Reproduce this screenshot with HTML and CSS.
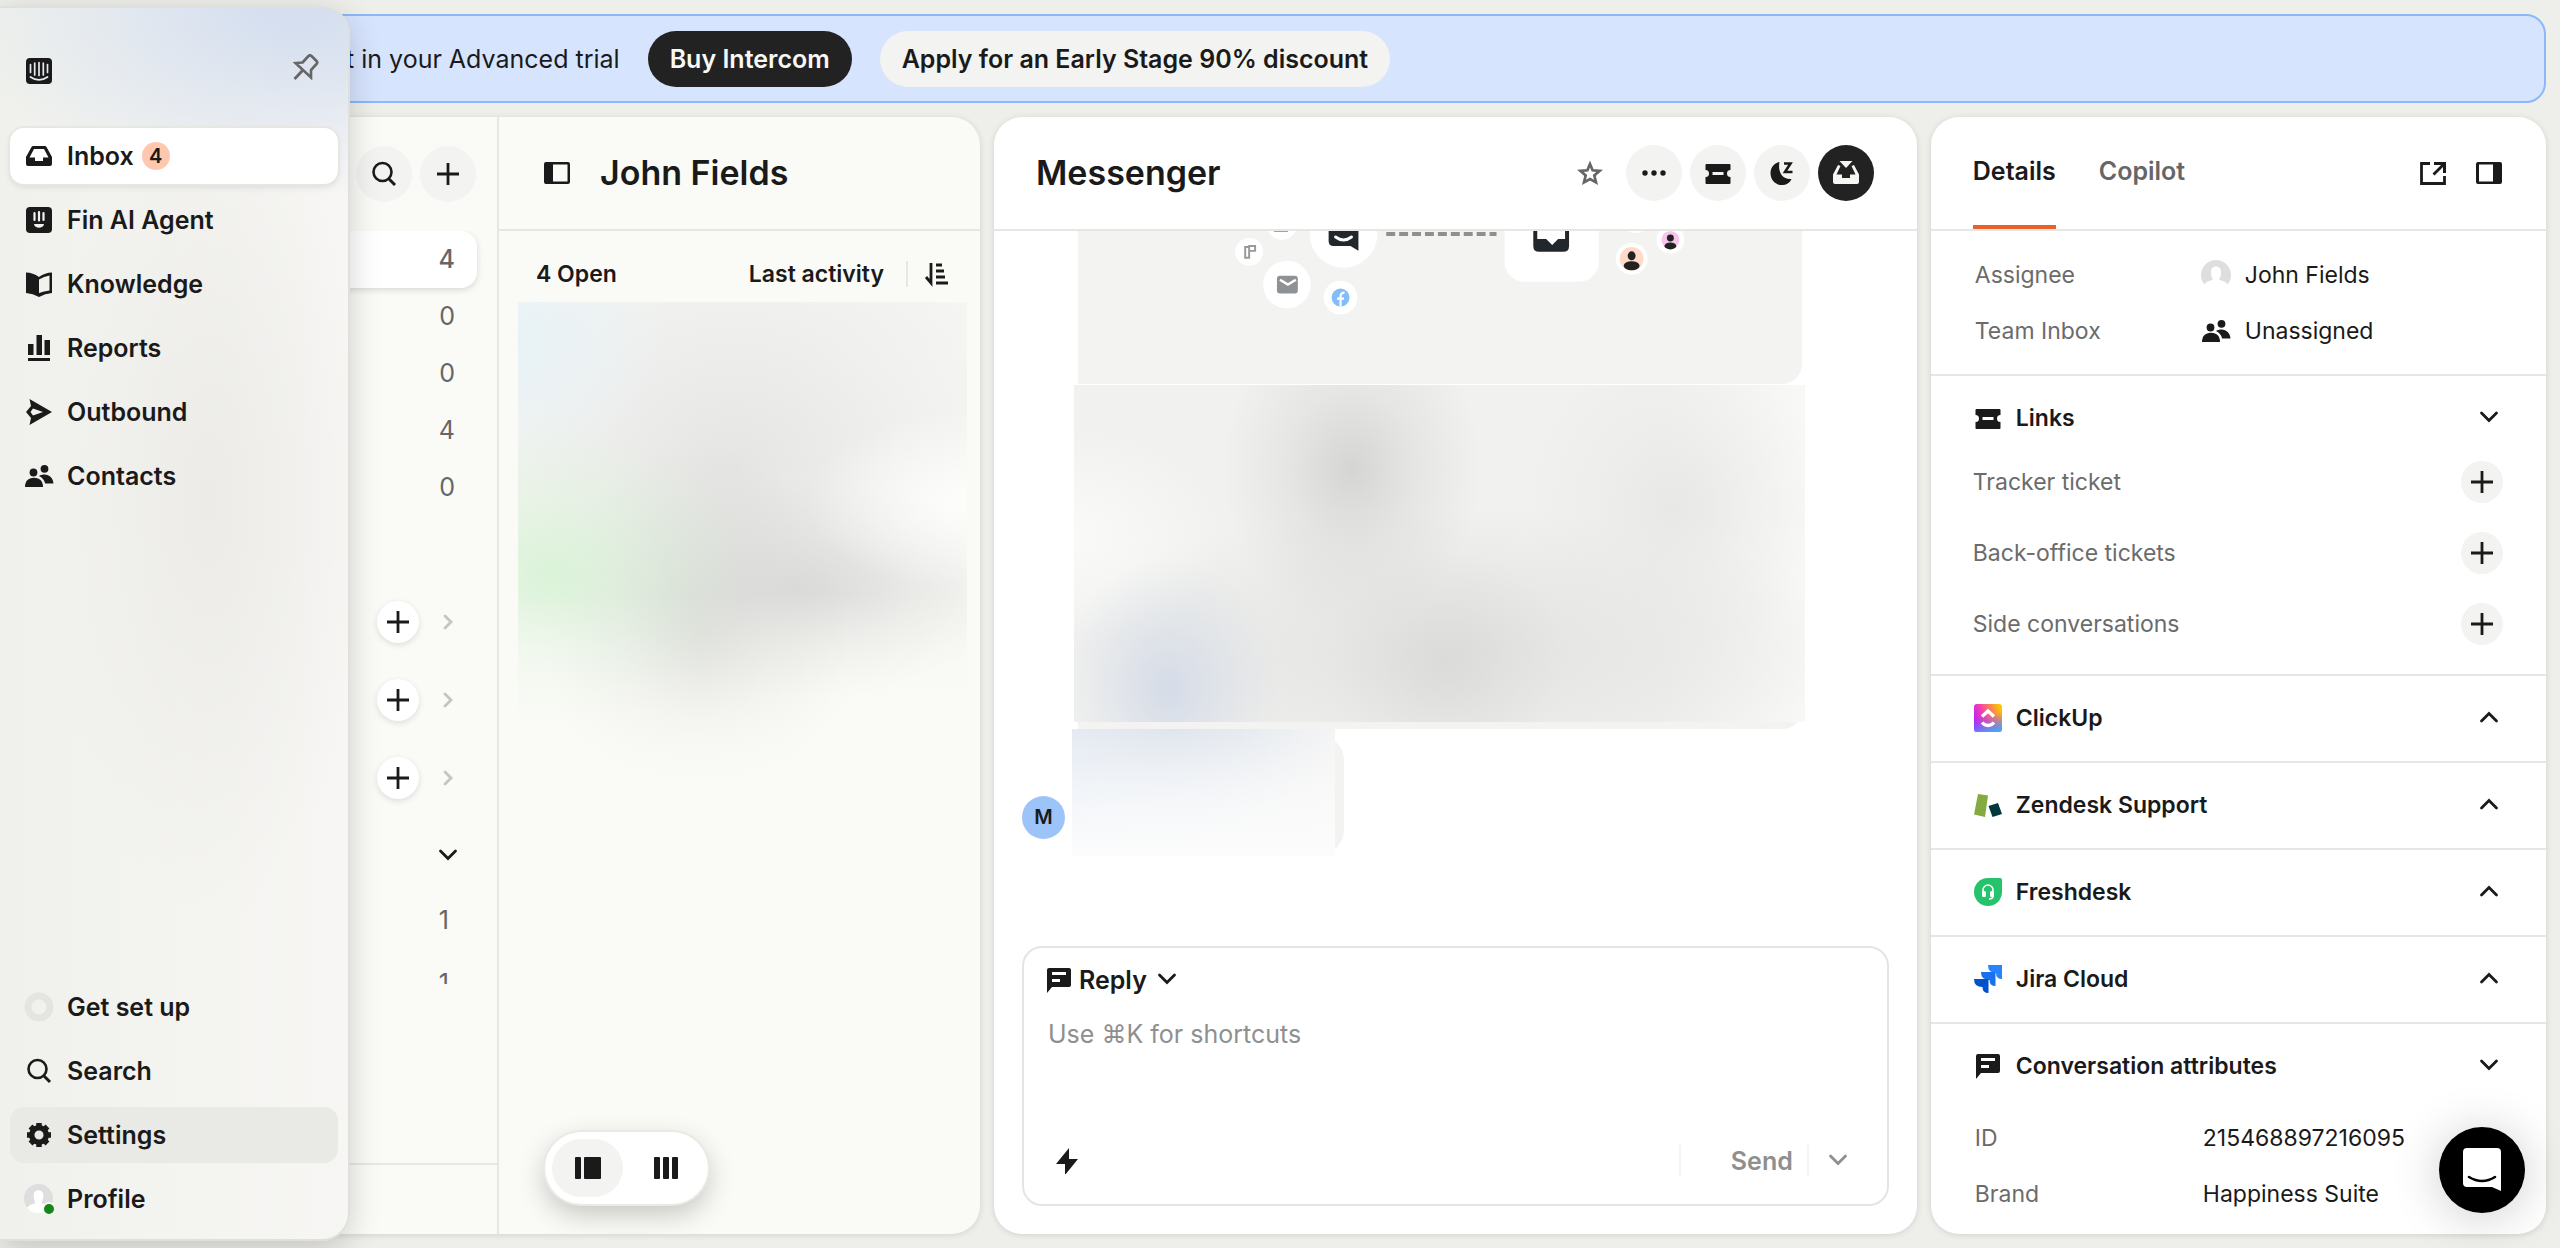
FILE: index.html
```html
<!DOCTYPE html>
<html lang="en">
<head>
    <meta charset="UTF-8">
    <meta name="viewport" content="width=device-width, initial-scale=1.0">
    <title>Inbox</title>
    <link rel="stylesheet" href="styles.css">
</head>
<body>
    <!-- Shared icons -->
    <svg class="sprite" aria-hidden="true">
        <symbol id="search" viewBox="0 0 26 26"><circle cx="11.500" cy="11" r="9" fill="none" stroke="currentColor" stroke-width="2.600"/><path d="M18 18l6 6" stroke="currentColor" stroke-width="3"/></symbol>
        <symbol id="plus" viewBox="0 0 26 26"><path d="M13 2v22M2 13h22" stroke="currentColor" stroke-width="2.800"/></symbol>
        <symbol id="down" viewBox="0 0 26 26"><path d="M5.500 8l7.500 7.500L20.500 8" fill="none" stroke="currentColor" stroke-width="2.800" stroke-linecap="round"/></symbol>
        <symbol id="up" viewBox="0 0 26 26"><path d="M5.500 16L13 8.500l7.500 7.500" fill="none" stroke="currentColor" stroke-width="2.800" stroke-linecap="round"/></symbol>
        <symbol id="right" viewBox="0 0 26 26"><path d="M10 7l6 6-6 6" fill="none" stroke="currentColor" stroke-width="2.800" stroke-linecap="round"/></symbol>
        <symbol id="people" viewBox="0 0 30 30"><circle cx="9.500" cy="11.500" r="3.900"/><path d="M1 26c0-5.500 3-9.200 9-9.200s9 3.700 9 9.200z"/><circle cx="20.500" cy="7.800" r="3.900"/><path d="M15 15c1.500-1 3.500-1.500 5.500-1.500 5 0 8.500 3.500 9 9h-8.300c-1-3.500-3-6-6.200-7.500z"/></symbol>
        <symbol id="avatar" viewBox="0 0 28 28"><circle cx="14" cy="14" r="14" fill="#dedede"/><path d="M14 6c3 0 4.700 2 4.700 5.500S17 18 17 18.500c4 1 7 2.500 8 4.500a14 14 0 0 1-22 0c1-2 4-3.500 8-4.500 0-.500-1.700-3.500-1.700-7S11 6 14 6z" fill="#fff"/></symbol>
        <symbol id="ticket" viewBox="0 0 26 26"><path fill-rule="evenodd" d="M1.500 4h23q1 0 1 1v5a3.500 3.500 0 0 0 0 7v6q0 1-1 1h-23q-1 0-1-1v-6a3.500 3.500 0 0 0 0-7V5q0-1 1-1zM7.500 12v3h11v-3z"/></symbol>
        <symbol id="note" viewBox="0 0 26 26"><path fill-rule="evenodd" d="M3 1h20a2 2 0 0 1 2 2v15a2 2 0 0 1-2 2H6l-5 6V3a2 2 0 0 1 2-2zM6 5v3h14V5zM6 12v3h8v-3z"/></symbol>
    </svg>

    <nav class="sidebar">
        <div class="sidebar-top">
            <svg class="icon" viewBox="0 0 26 26"><rect width="26" height="26" rx="4"/><path d="M4.500 6.500v8M8.700 5v12M13 4.500v13M17.300 5v12M21.500 6.500v8" stroke="#e6eaf0" stroke-width="1.700" stroke-linecap="round"/><path d="M4.500 19c5 3.700 12 3.700 17 0" fill="none" stroke="#e6eaf0" stroke-width="1.800" stroke-linecap="round"/></svg>
            <button class="pin" aria-label="Unpin menu"><svg class="icon" viewBox="0 0 26 26"><path d="M9.500 8.500l6-6.500q1.500-1.500 3 0l5 5q1.500 1.500 0 3l-5.500 6v7.500L2.500 9z" fill="none" stroke="currentColor" stroke-width="2.600"/><path d="M10 16l-8.500 9" stroke="currentColor" stroke-width="2.800"/></svg></button>
        </div>
        <div class="menu">
            <a href="#" class="active"><svg class="icon" viewBox="0 0 26 26"><path fill-rule="evenodd" d="M7 3h12q1 0 1.500 1L26 14v7q0 2-2 2H2q-2 0-2-2v-7L5.500 4Q6 3 7 3zM8 6l-4.500 8.500H9V18h8v-3.500h5.500L18 6z"/></svg>Inbox <span class="badge">4</span></a>
            <a href="#"><svg class="icon" viewBox="0 0 26 26"><rect width="26" height="26" rx="4"/><path d="M8.500 6v7M13 5v8.500M17.500 6v7" stroke="#f2f2ef" stroke-width="2.200" stroke-linecap="round"/><path d="M8 17h10c-.500 5-9.500 5-10 0z" fill="#f2f2ef"/></svg>Fin AI Agent</a>
            <a href="#"><svg class="icon" viewBox="0 0 26 26"><path fill-rule="evenodd" d="M0 1.500q7 0 13 4.500 6-4.500 13-4.500V22q-7 .500-13 4-6-3.500-13-4zM13 8.500v13.500q5-2 10.500-2.500V4.500Q18 5.500 13 8.500z"/></svg>Knowledge</a>
            <a href="#"><svg class="icon" viewBox="0 0 26 26"><path d="M2 9h5.500v11H2zM10.500 0H16v20h-5.500zM18.500 5H24v15h-5.500zM2 23h22v3H2z"/></svg>Reports</a>
            <a href="#"><svg class="icon" viewBox="0 0 26 26"><path fill-rule="evenodd" d="M3.500 0L26 13 3.500 26l1.500-7-5-6 5-6zM7 9.500L4.500 13 7 16.500l10-3.500z"/></svg>Outbound</a>
            <a href="#"><svg class="icon people"><use href="#people"/></svg>Contacts</a>
        </div>
        <div class="menu">
            <a href="#"><svg class="icon people" viewBox="0 0 30 30"><circle cx="15" cy="15" r="11" fill="none" stroke="#e4e5e0" stroke-width="7"/></svg>Get set up</a>
            <a href="#"><svg class="icon"><use href="#search"/></svg>Search</a>
            <a href="#" class="hovered"><svg class="icon" viewBox="0 0 26 26"><circle cx="13" cy="13" r="7.300" fill="none" stroke="currentColor" stroke-width="5.500"/><path d="M13 1v5M13 20v5M1 13h5M20 13h5M4.500 4.500l4 4M17.500 17.500l4 4M4.500 21.500l4-4M17.500 8.500l4-4" stroke="currentColor" stroke-width="5.500"/></svg>Settings</a>
            <a href="#"><svg class="icon people" viewBox="0 0 30 30"><use href="#avatar" width="29" height="29"/><circle cx="25" cy="25" r="7" fill="#f8f8f6"/><circle cx="25" cy="25" r="5" fill="#16851a"/></svg>Profile</a>
        </div>
    </nav>

    <div class="banner">
        <span>left in your Advanced trial</span>
        <button class="pill dark">Buy Intercom</button>
        <button class="pill">Apply for an Early Stage 90% discount</button>
    </div>

    <main>
        <div class="panel lists">
            <section class="folders">
                <div class="folders-head">
                    <button class="round" aria-label="Search"><svg class="icon"><use href="#search"/></svg></button>
                    <button class="round" aria-label="New conversation"><svg class="icon"><use href="#plus"/></svg></button>
                </div>
                <div class="folders-scroll">
                    <ul class="counts">
                        <li class="selected">4</li>
                        <li>0</li>
                        <li>0</li>
                        <li>4</li>
                        <li>0</li>
                    </ul>
                    <div class="group"><button class="round small raised" aria-label="Add"><svg class="icon"><use href="#plus"/></svg></button><svg class="icon faint"><use href="#right"/></svg></div>
                    <div class="group"><button class="round small raised" aria-label="Add"><svg class="icon"><use href="#plus"/></svg></button><svg class="icon faint"><use href="#right"/></svg></div>
                    <div class="group"><button class="round small raised" aria-label="Add"><svg class="icon"><use href="#plus"/></svg></button><svg class="icon faint"><use href="#right"/></svg></div>
                    <div class="group"><svg class="icon"><use href="#down"/></svg></div>
                    <ul class="views">
                        <li>1</li>
                        <li>1</li>
                    </ul>
                </div>
                <div class="folders-foot"></div>
            </section>

            <section class="conversations">
                <header>
                    <button class="plain" aria-label="Toggle folders"><svg class="icon" viewBox="0 0 26 26"><path fill-rule="evenodd" d="M2 2h22q2 0 2 2v18q0 2-2 2H2q-2 0-2-2V4q0-2 2-2zM9 4.500v17h14.500v-17z"/></svg></button>
                    <h2>John Fields</h2>
                </header>
                <div class="filters">
                    <button class="plain">4 Open</button>
                    <button class="plain sort">Last activity</button>
                    <button class="plain order" aria-label="Sort order"><svg class="icon" viewBox="0 0 26 26"><path d="M7 2v18M2 16l5 6V12M12 4h6M12 10h8M12 16h9M12 22h12" fill="none" stroke="currentColor" stroke-width="2.800"/></svg></button>
                </div>
                <div class="blur-list"></div>
                <div class="view-toggle">
                    <button class="on" aria-label="List view"><svg class="icon" viewBox="0 0 26 26"><rect y="2" width="6" height="22" rx="1"/><rect x="9" y="2" width="17" height="22" rx="1"/></svg></button>
                    <button aria-label="Table view"><svg class="icon" viewBox="0 0 26 26"><rect x="1" y="2" width="6" height="22" rx="1"/><rect x="10" y="2" width="6" height="22" rx="1"/><rect x="19" y="2" width="6" height="22" rx="1"/></svg></button>
                </div>
            </section>
        </div>

        <section class="panel chat">
            <header>
                <h2>Messenger</h2>
                <div class="actions">
                    <button class="round bare" aria-label="Star"><svg class="icon" viewBox="0 0 26 26"><path d="M13 4l2.600 6.300 7 .600-5.300 4.500 1.700 7L13 19l-6 3.400 1.700-7-5.300-4.500 7-.600z" fill="none" stroke="currentColor" stroke-width="2.700"/></svg></button>
                    <button class="round" aria-label="More"><svg class="icon" viewBox="0 0 26 26"><circle cx="4" cy="13" r="2.700"/><circle cx="13" cy="13" r="2.700"/><circle cx="22" cy="13" r="2.700"/></svg></button>
                    <button class="round" aria-label="Ticket"><svg class="icon"><use href="#ticket"/></svg></button>
                    <button class="round" aria-label="Snooze"><svg class="icon" viewBox="0 0 26 26"><path d="M10.500 2C5 3 1.500 8 1.500 13c0 7 5 12 11 12 5 0 8-2 10-6-9 1-14-7-12-17z"/><path d="M15 3.500h6.500L16 12h7.500" fill="none" stroke="currentColor" stroke-width="2.600"/></svg></button>
                    <button class="round dark" aria-label="Close conversation"><svg class="icon" viewBox="0 0 26 26"><path d="M5 5l2.500 1-4 8.500H9V18h8v-3.500h5.500l-4-8.500L21 5l5 9.500V22q0 2-2 2H2q-2 0-2-2v-7.500z" fill="#f6f6f2"/><path d="M6.500 1h13L13 8z" fill="#f6f6f2"/></svg></button>
                </div>
            </header>

            <div class="messages">
                <div class="illustration">
                    <svg viewBox="0 0 722 154">
                        <g fill="#fff">
                            <circle cx="202" cy="-6" r="15"/><circle cx="169" cy="21" r="14"/><circle cx="207" cy="54" r="24"/><circle cx="264" cy="3" r="34"/><circle cx="261" cy="67" r="17"/>
                            <rect x="426" y="-45" width="95" height="96" rx="20"/><circle cx="554" cy="28" r="16"/><circle cx="593" cy="9" r="14"/><circle cx="558" cy="-12" r="14"/>
                        </g>
                        <path d="M194 0h14v1h-14z" fill="#f08a5d"/>
                        <path d="M249-20h30v40l-8-5h-17q-5 0-5-5z" fill="#22272c"/>
                        <path d="M256 6q8 6 16 0" fill="none" stroke="#fff" stroke-width="3" stroke-linecap="round"/>
                        <path d="M307 3h111" stroke="#8f8f8f" stroke-width="4" stroke-dasharray="9 4"/>
                        <path d="M455-20h36v35q0 6-6 6h-24q-6 0-6-6zM459-20V8h9l6 6 6-6h7v-28z" fill="#22272c" fill-rule="evenodd"/>
                        <path d="M165 16v11h4v-11zM169 15h6v5h-6z" fill="none" stroke="#9a9a9a" stroke-width="2"/>
                        <rect x="197" y="45" width="21" height="18" rx="3" fill="#8f9295"/><path d="M200 49l8 5 8-5" fill="none" stroke="#fff" stroke-width="2.500"/>
                        <circle cx="261" cy="67" r="9" fill="#82bdf7"/><path d="M261 76v-10q0-4 4-4M257.500 68h7" fill="none" stroke="#fff" stroke-width="2.200"/>
                        <circle cx="554" cy="28" r="12" fill="#ffd9c9"/><ellipse cx="554" cy="25" rx="4" ry="4.500" fill="#222"/><ellipse cx="554" cy="35" rx="8" ry="4.500" fill="#222"/>
                        <circle cx="593" cy="9" r="9" fill="#f9c4ea"/><circle cx="593" cy="7" r="3.500" fill="#222"/><ellipse cx="593" cy="15" rx="6" ry="3.500" fill="#222"/>
                    </svg>
                </div>
                <div class="message"><div class="blur-message"></div></div>
                <div class="message-row">
                    <span class="initial">M</span>
                    <div class="reply"><div class="blur-reply"></div></div>
                </div>
            </div>

            <form class="composer">
                <label class="mode">
                    <svg class="icon"><use href="#note"/></svg>
                    <select aria-label="Reply type"><option>Reply</option><option>Note</option></select>
                    <svg class="icon"><use href="#down"/></svg>
                </label>
                <textarea aria-label="Message" placeholder="Use ⌘K for shortcuts"></textarea>
                <div class="composer-foot">
                    <button type="button" class="plain" aria-label="Shortcuts"><svg class="icon" viewBox="0 0 26 26"><path d="M15 0v11h9L11 27V16H2z"/></svg></button>
                    <button type="submit" class="plain send">Send</button>
                    <button type="button" class="plain more" aria-label="Send options"><svg class="icon"><use href="#down"/></svg></button>
                </div>
            </form>
        </section>

        <aside class="panel details">
            <header>
                <button class="tab current">Details</button>
                <button class="tab">Copilot</button>
                <div class="tools">
                    <button class="plain" aria-label="Open in new tab"><svg class="icon" viewBox="0 0 26 26"><path d="M10 3.500H1.500v20h23V16" fill="none" stroke="currentColor" stroke-width="2.800"/><path d="M14 2h12v11h-3V7L14.500 15.500l-2-2L21 5h-7z"/></svg></button>
                    <button class="plain" aria-label="Toggle details"><svg class="icon" viewBox="0 0 26 26"><path fill-rule="evenodd" d="M2 2h22q2 0 2 2v18q0 2-2 2H2q-2 0-2-2V4q0-2 2-2zM3 4.500v17h14v-17z"/></svg></button>
                </div>
            </header>

            <dl class="fields">
                <div><dt>Assignee</dt><dd><svg class="icon people"><use href="#avatar"/></svg>John Fields</dd></div>
                <div><dt>Team Inbox</dt><dd><svg class="icon people"><use href="#people"/></svg>Unassigned</dd></div>
            </dl>

            <section class="links">
                <h3><svg class="icon"><use href="#ticket"/></svg>Links<button class="plain" aria-label="Collapse"><svg class="icon"><use href="#down"/></svg></button></h3>
                <ul>
                    <li>Tracker ticket<button class="round small" aria-label="Add tracker ticket"><svg class="icon"><use href="#plus"/></svg></button></li>
                    <li>Back-office tickets<button class="round small" aria-label="Add back-office ticket"><svg class="icon"><use href="#plus"/></svg></button></li>
                    <li>Side conversations<button class="round small" aria-label="Add side conversation"><svg class="icon"><use href="#plus"/></svg></button></li>
                </ul>
            </section>

            <section class="app">
                <h3><svg class="icon logo" viewBox="0 0 28 28"><defs><linearGradient id="cu" x1="0" y1="0.700" x2="1" y2="0.300"><stop offset="0" stop-color="#b31dff"/><stop offset=".4" stop-color="#f43fb0"/><stop offset="1" stop-color="#ffc400"/></linearGradient><linearGradient id="cb" x1=".5" y1=".1" x2=".7" y2="1"><stop offset=".3" stop-color="#7a5cff" stop-opacity="0"/><stop offset="1" stop-color="#40a8ff"/></linearGradient></defs><rect width="28" height="28" rx="3" fill="url(#cu)"/><rect width="28" height="28" rx="3" fill="url(#cb)"/><path d="M8 12.500L14 7l6 5.500M8 18.500c3.500 4 8.500 4 12 0" fill="none" stroke="#fff" stroke-width="3.400"/></svg>ClickUp<button class="plain" aria-label="Expand"><svg class="icon"><use href="#up"/></svg></button></h3>
            </section>
            <section class="app">
                <h3><svg class="icon logo" viewBox="0 0 28 28"><path d="M4 3l10 1.500L11 26 0 23.500z" fill="#84ab3f"/><path d="M14.500 15l9.500-3 4 11-9.500 3z" fill="#03363d"/></svg>Zendesk Support<button class="plain" aria-label="Expand"><svg class="icon"><use href="#up"/></svg></button></h3>
            </section>
            <section class="app">
                <h3><svg class="icon logo" viewBox="0 0 28 28"><path d="M14 0h12q2 0 2 2v12A14 14 0 1 1 14 0z" fill="#27c26c"/><path d="M9 15v-3a5 5 0 0 1 10 0v6q0 3-4 3" fill="none" stroke="#fff" stroke-width="1.600"/><rect x="8" y="13" width="4" height="6" rx="1.500" fill="#fff"/><rect x="16" y="13" width="4" height="6" rx="1.500" fill="#fff"/></svg>Freshdesk<button class="plain" aria-label="Expand"><svg class="icon"><use href="#up"/></svg></button></h3>
            </section>
            <section class="app">
                <h3><svg class="icon logo" viewBox="0 0 28 28"><path d="M14 0h14v14q-6 0-6-6-8 0-8-8z" fill="#2684ff"/><path d="M7 7h14.500v14q-6 0-6-6Q7 15 7 7z" fill="#1a6fec"/><path d="M0 14h14.500v14q-6 0-6-6Q0 22 0 14z" fill="#0052cc"/></svg>Jira Cloud<button class="plain" aria-label="Expand"><svg class="icon"><use href="#up"/></svg></button></h3>
            </section>

            <section class="attributes">
                <h3><svg class="icon"><use href="#note"/></svg>Conversation attributes<button class="plain" aria-label="Collapse"><svg class="icon"><use href="#down"/></svg></button></h3>
                <dl class="fields">
                    <div><dt>ID</dt><dd>215468897216095</dd></div>
                    <div><dt>Brand</dt><dd>Happiness Suite</dd></div>
                </dl>
            </section>
        </aside>
    </main>

    <button class="launcher" aria-label="Open messenger"><svg viewBox="0 0 38 44"><path d="M4 0h30q4 0 4 4v39l-9-4H4q-4 0-4-4V4q0-4 4-4z" fill="#fff"/><path d="M6 29q13 8 26 0" fill="none" stroke="#000" stroke-width="2.600" stroke-linecap="round"/></svg></button>
</body>
</html>
```
FILE: styles.css
```css
* {
    margin: 0;
    padding: 0;
    box-sizing: border-box;
}

body {
    background-color: #eeeeea;
    color: #1a1a1a;
    font-family: Inter, "Liberation Sans", sans-serif;
    font-size: 25px;
    line-height: 32px;
    height: 100vh;
    display: flex;
    flex-direction: column;
    gap: 14px;
    padding: 14px 14px 14px 0;
    overflow: hidden;
}

button,
select,
textarea {
    font: inherit;
    color: inherit;
    background: none;
    border: none;
    cursor: pointer;
}

ul {
    list-style: none;
}

.sprite {
    display: none;
}

.icon {
    width: 26px;
    height: 26px;
    fill: currentColor;
    flex: none;
    display: block;
}

.people {
    width: 30px;
    height: 30px;
    margin: 0 -2px;
}

.logo {
    width: 28px;
    height: 28px;
    margin: 0 -1px;
}

.plain {
    font-weight: 600;
}

.round {
    width: 56px;
    height: 56px;
    border-radius: 50%;
    background-color: #f3f3f1;
    display: grid;
    place-items: center;
    flex: none;
}

.small {
    width: 42px;
    height: 42px;
}

.raised {
    background-color: #fff;
    box-shadow: 0 2px 6px rgba(0,0,0,0.12);
}

.bare {
    background: none;
    color: #666;
}

.dark {
    background-color: #222;
    color: #f8f8f4;
}

/* Navigation that slides over the page */
.sidebar {
    position: absolute;
    z-index: 2;
    left: 0;
    top: 6px;
    bottom: 7px;
    width: 350px;
    border: 2px solid #dfdfdb;
    border-left: none;
    border-radius: 0 28px 28px 0;
    padding: 46px 10px 12px;
    display: flex;
    flex-direction: column;
    background:
        radial-gradient(ellipse 340px 190px at 85% 0, #d5dfef 10%, rgba(213,223,239,0) 100%),
        radial-gradient(ellipse 160px 420px at 60% 40%, #ecebe8, rgba(236,235,232,0) 100%),
        linear-gradient(90deg, #f0f1ec, #f7f6f4);
    box-shadow: 0 8px 32px rgba(0,0,0,0.18);
}

.sidebar-top {
    display: flex;
    justify-content: space-between;
    align-items: flex-end;
    height: 30px;
    padding: 0 19px 0 16px;
    margin-bottom: 44px;
}

.pin {
    align-self: flex-start;
    color: #666;
}

.menu {
    display: flex;
    flex-direction: column;
    gap: 8px;
}

.menu:last-child {
    margin-top: auto;
}

.menu a {
    display: flex;
    align-items: center;
    gap: 15px;
    height: 56px;
    padding: 0 16px;
    border-radius: 14px;
    color: inherit;
    font-weight: 600;
    text-decoration: none;
}

.menu .active {
    background-color: #fff;
    box-shadow: 0 0 0 2px #e6e6e2, 0 3px 6px rgba(0,0,0,0.1);
}

.menu .hovered {
    background-color: #e9e9e5;
}

.badge {
    width: 28px;
    height: 28px;
    margin-left: -7px;
    border-radius: 50%;
    background-color: #ffc8ae;
    font-size: 20px;
    line-height: 28px;
    text-align: center;
}

.banner {
    display: flex;
    align-items: center;
    gap: 28px;
    height: 89px;
    flex: none;
    padding-left: 315px;
    border: 2px solid #8ab8f8;
    border-radius: 20px;
    background-color: #d7e4fe;
}

.pill {
    height: 56px;
    padding: 0 22px;
    border-radius: 28px;
    background-color: #f3f3f1;
    font-weight: 600;
}

.pill.dark {
    background-color: #222;
}

main {
    flex: 1;
    min-height: 0;
    display: flex;
    gap: 14px;
}

.panel {
    background-color: #fff;
    border-radius: 28px;
    box-shadow: 0 1px 6px rgba(0,0,0,0.12);
    overflow: hidden;
}

.panel header {
    height: 114px;
    flex: none;
    border-bottom: 2px solid #e6e6e2;
    display: flex;
    align-items: center;
}

h2 {
    font-size: 34px;
    line-height: 44px;
    font-weight: 600;
}

.lists {
    flex: none;
    display: flex;
    background-color: #fafaf6;
    border-radius: 0 28px 28px 0;
}

.folders {
    width: 499px;
    border-right: 2px solid #e6e6e2;
    display: flex;
    flex-direction: column;
    color: #666;
}

.folders-head {
    display: flex;
    justify-content: flex-end;
    align-items: center;
    gap: 8px;
    height: 114px;
    padding-right: 21px;
}

.folders-scroll {
    flex: 1;
    min-height: 0;
    overflow: hidden;
}

.counts {
    margin-bottom: 67px;
}

.counts li {
    height: 57px;
    line-height: 57px;
    margin-right: 20px;
    padding-right: 22px;
    text-align: right;
}

.counts .selected {
    background-color: #fff;
    border-radius: 16px;
    box-shadow: 0 2px 6px rgba(0,0,0,0.14);
    font-weight: 500;
}

.folders button,
.folders .group {
    color: #1a1a1a;
}

.group {
    height: 78px;
    display: flex;
    justify-content: flex-end;
    align-items: center;
    gap: 16px;
    padding-right: 36px;
}

.folders .faint {
    color: #c4c4c0;
}

.views {
    display: grid;
    gap: 13px;
    padding-right: 48px;
    text-align: right;
    line-height: 50px;
}

.folders-foot {
    height: 71px;
    margin-top: 179px;
    border-top: 2px solid #e6e6e2;
}

.conversations {
    width: 481px;
    display: flex;
    flex-direction: column;
    align-items: stretch;
}

.conversations header {
    gap: 30px;
    padding-left: 45px;
}

.filters {
    display: flex;
    align-items: center;
    height: 71px;
    padding: 14px 30px 0 37px;
    font-size: 23px;
}

.sort {
    margin-left: auto;
}

.order {
    margin-left: 22px;
    padding-left: 16px;
    border-left: 2px solid #e6e6e2;
}

.blur-list {
    height: 486px;
    margin: 0 13px 0 19px;
    background:
        linear-gradient(rgba(250,250,246,0) 60%, #fafaf6 100%),
        radial-gradient(ellipse 160px 90px at 100% 41%, #fdfdfc, rgba(253,253,252,0)),
        radial-gradient(ellipse 190px 150px at 8% 56%, #daf3d8, rgba(218,243,216,.4) 50%, rgba(218,243,216,0)),
        radial-gradient(ellipse 150px 130px at 0 8%, #e8f2f6, rgba(232,242,246,0)),
        radial-gradient(ellipse 230px 110px at 62% 59%, #dadad8, rgba(218,218,216,.4) 50%, rgba(218,218,216,0)),
        radial-gradient(ellipse 150px 190px at 40% 68%, #d6d9d3, rgba(214,217,211,.4) 50%, rgba(214,217,211,0)),
        radial-gradient(ellipse 300px 260px at 48% 34%, #e5e5e3, rgba(236,236,234,.6) 60%, rgba(242,242,240,0)),
        linear-gradient(#f5f6f4, #fafaf6);
}

.view-toggle {
    align-self: flex-start;
    display: flex;
    gap: 7px;
    margin: auto 0 30px 46px;
    padding: 7px;
    border-radius: 36px;
    background-color: #fff;
    box-shadow: 0 0 0 2px #e9e9e5, 0 10px 28px rgba(0,0,0,0.22);
}

.view-toggle button {
    width: 71px;
    height: 58px;
    border-radius: 29px;
    display: grid;
    place-items: center;
}

.view-toggle .on {
    background-color: #f3f3f1;
}

.chat {
    flex: 3;
    min-width: 0;
    display: flex;
    flex-direction: column;
}

.chat header {
    justify-content: space-between;
    padding: 0 43px 0 42px;
}

.actions {
    display: flex;
    gap: 8px;
}

.messages {
    flex: 1;
    min-height: 0;
    overflow: hidden;
    padding: 0 112px 0 80px;
}

.illustration {
    margin: 0 3px 0 4px;
    height: 153px;
    overflow: hidden;
    background-color: #f3f3f1;
    border-radius: 0 0 20px 0;
}

.illustration svg {
    display: block;
    width: 100%;
    height: 100%;
}

.message {
    margin: 1px 3px 0 4px;
    padding-bottom: 7px;
    border-radius: 0 0 20px 0;
    background-color: #f3f3f1;
}

.blur-message {
    height: 337px;
    margin: 0 -3px 0 -4px;
    background:
        radial-gradient(ellipse 110px 130px at 13% 90%, #d5dce8, rgba(213,220,232,.45) 50%, rgba(213,220,232,0)),
        radial-gradient(ellipse 130px 160px at 38% 25%, #d5d5d4, rgba(213,213,212,.4) 50%, rgba(213,213,212,0)),
        radial-gradient(ellipse 120px 110px at 51% 82%, #dbdbda, rgba(219,219,218,.4) 50%, rgba(219,219,218,0)),
        radial-gradient(ellipse 150px 110px at 0 45%, #fafaf8, rgba(250,250,248,0)),
        radial-gradient(ellipse 150px 160px at 82% 36%, #e8e8e7, rgba(232,232,231,.4) 50%, rgba(232,232,231,0)),
        radial-gradient(ellipse 400px 140px at 52% 78%, #e3e3e1, rgba(228,228,226,.5) 60%, rgba(228,228,226,0)),
        linear-gradient(90deg, #f1f1ef 80%, #f8f8f6);
}

.message-row {
    display: flex;
    align-items: flex-end;
    gap: 7px;
    margin-left: -52px;
}

.initial {
    width: 43px;
    height: 43px;
    margin-bottom: 15px;
    border-radius: 50%;
    background-color: #9dc4f8;
    font-size: 20px;
    line-height: 43px;
    font-weight: 600;
    text-align: center;
}

.reply {
    margin-top: 7px;
    padding-right: 9px;
    border-radius: 0 24px 24px 0;
    background-color: #f3f3f1;
}

.blur-reply {
    width: 263px;
    height: 127px;
    margin: -7px 0 -2px;
    background:
        linear-gradient(rgba(252,252,252,0), #fcfcfc),
        radial-gradient(ellipse 180px 90px at 38% 0, #e0e5ed, rgba(224,229,237,0)),
        linear-gradient(90deg, #e9eff7, #f6f6f5);
}

.composer {
    flex: none;
    display: flex;
    flex-direction: column;
    height: 260px;
    margin: 0 28px 28px;
    padding: 14px 28px 16px 22px;
    border: 2px solid #e4e4e0;
    border-radius: 20px;
}

.mode {
    display: flex;
    align-items: center;
    gap: 7px;
    height: 36px;
    font-weight: 600;
}

.mode select {
    appearance: none;
}

.composer textarea {
    flex: 1;
    min-height: 0;
    margin-top: 20px;
    padding-left: 2px;
    resize: none;
    outline: none;
}

.composer textarea::placeholder {
    color: #8f8f8f;
}

.composer-foot {
    display: flex;
    align-items: center;
    height: 54px;
    padding: 0 8px;
    color: #8f8f8f;
}

.composer-foot .plain:first-child {
    color: #1a1a1a;
}

.send {
    margin-left: auto;
    padding: 0 14px 0 50px;
    border-left: 2px solid #f4f4f2;
    border-right: 2px solid #f4f4f2;
}

.more {
    margin-left: 16px;
}

.details {
    flex: 2;
    min-width: 0;
    font-size: 23px;
}

.details header {
    align-items: stretch;
    padding: 0 44px 0 42px;
}

.tab {
    height: 112px;
    margin-right: 43px;
    color: #666;
    font-size: 25px;
    font-weight: 600;
    border-bottom: 4px solid transparent;
}

.tab.current {
    color: #1a1a1a;
    border-bottom-color: #e9602a;
}

.tools {
    display: flex;
    align-items: center;
    gap: 30px;
    margin-left: auto;
}

.fields {
    padding: 16px 44px 15px;
    border-bottom: 2px solid #e6e6e2;
}

.fields div {
    display: flex;
    align-items: center;
    height: 56px;
}

dt {
    width: 228px;
    color: #6b6b6b;
}

dd {
    display: flex;
    align-items: center;
    gap: 16px;
}

h3 {
    display: flex;
    align-items: center;
    gap: 15px;
    height: 56px;
    font-size: 23px;
    font-weight: 600;
}

h3 .plain {
    margin-left: auto;
}

.links,
.attributes {
    padding: 14px 44px;
    border-bottom: 2px solid #e6e6e2;
}

.links ul {
    margin: 0 -1px 1px -2px;
}

.links li {
    display: flex;
    justify-content: space-between;
    align-items: center;
    height: 71px;
    color: #6b6b6b;
}

.links .small {
    color: #1a1a1a;
}

.app {
    padding: 14px 44px 15px;
    border-bottom: 2px solid #e6e6e2;
}

.attributes .fields {
    padding: 16px 0 0;
    border: none;
}

/* Floating chat launcher */
.launcher {
    position: absolute;
    z-index: 1;
    right: 35px;
    bottom: 35px;
    width: 86px;
    height: 86px;
    border-radius: 50%;
    background-color: #000;
    display: grid;
    place-items: center;
    box-shadow: 0 4px 50px rgba(0,0,0,0.2);
}

.launcher svg {
    width: 38px;
    height: 44px;
}
```
